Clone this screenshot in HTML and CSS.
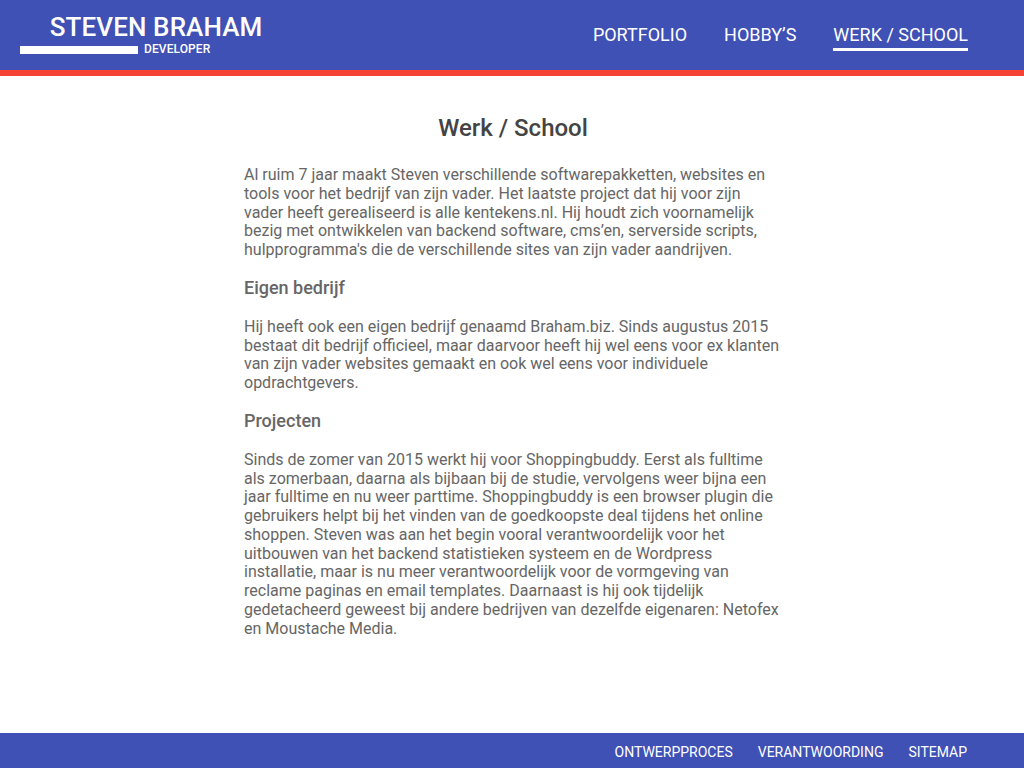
FILE: index.html
```html
<!DOCTYPE html>
<html lang="nl">
<head>
<meta charset="utf-8">
<title>Werk / School - Steven Braham</title>
<link rel="stylesheet" href="styles.css">
</head>
<body>
<header class="topbar">
  <div class="brand">
    <div class="brand-name">STEVEN BRAHAM</div>
    <div class="brand-sub">
      <span class="brand-line"></span>
      <span class="brand-role">DEVELOPER</span>
    </div>
  </div>
  <nav class="mainnav">
    <a href="#" class="navlink">PORTFOLIO</a>
    <a href="#" class="navlink">HOBBY’S</a>
    <a href="#" class="navlink active">WERK / SCHOOL</a>
  </nav>
</header>
<main class="content">
  <h1 class="page-title">Werk / School</h1>
  <p>Al ruim 7 jaar maakt Steven verschillende softwarepakketten, websites en tools voor het bedrijf van zijn vader. Het laatste project dat hij voor zijn vader heeft gerealiseerd is alle kentekens.nl. Hij houdt zich voornamelijk bezig met ontwikkelen van backend software, cms’en, serverside scripts, hulpprogramma's die de verschillende sites van zijn vader aandrijven.</p>
  <h3 class="section-title">Eigen bedrijf</h3>
  <p>Hij heeft ook een eigen bedrijf genaamd Braham.biz. Sinds augustus 2015 bestaat dit bedrijf officieel, maar daarvoor heeft hij wel eens voor ex klanten van zijn vader websites gemaakt en ook wel eens voor individuele opdrachtgevers.</p>
  <h3 class="section-title">Projecten</h3>
  <p>Sinds de zomer van 2015 werkt hij voor Shoppingbuddy. Eerst als fulltime als zomerbaan, daarna als bijbaan bij de studie, vervolgens weer bijna een jaar fulltime en nu weer parttime. Shoppingbuddy is een browser plugin die gebruikers helpt bij het vinden van de goedkoopste deal tijdens het online shoppen. Steven was aan het begin vooral verantwoordelijk voor het uitbouwen van het backend statistieken systeem en de Wordpress installatie, maar is nu meer verantwoordelijk voor de vormgeving van reclame paginas en email templates. Daarnaast is hij ook tijdelijk gedetacheerd geweest bij andere bedrijven van dezelfde eigenaren: Netofex en Moustache Media.</p>
</main>
<footer class="footbar">
  <a href="#" class="footlink">ONTWERPPROCES</a>
  <a href="#" class="footlink">VERANTWOORDING</a>
  <a href="#" class="footlink">SITEMAP</a>
</footer>
</body>
</html>
```
FILE: styles.css
```css
* { box-sizing: border-box; }
html, body { height: 100%; }
body {
  margin: 0;
  font-family: Roboto, "Liberation Sans", sans-serif;
  background: #fff;
  display: flex;
  flex-direction: column;
}
a { text-decoration: none; color: #fff; }

.topbar {
  background: #3f51b5;
  height: 76px;
  border-bottom: 6px solid #f44336;
  display: flex;
  justify-content: space-between;
  align-items: flex-start;
  padding: 0 56px 0 20px;
  flex-shrink: 0;
}
.brand {
  display: flex;
  flex-direction: column;
  align-items: flex-end;
  padding-top: 13px;
  color: #fff;
}
.brand-name {
  font-size: 26px;
  font-weight: 500;
  line-height: 28px;
  margin-right: -52px;
  letter-spacing: 0.1px;
}
.brand-sub {
  display: flex;
  align-items: center;
  margin-top: 2px;
}
.brand-line {
  display: block;
  width: 118px;
  height: 8px;
  background: #fff;
  margin-right: 6px;
}
.brand-role {
  font-size: 12px;
  font-weight: 500;
  line-height: 13px;
  letter-spacing: 0.1px;
}

.mainnav {
  display: flex;
  gap: 37px;
  padding-top: 24px;
}
.navlink {
  font-size: 18px;
  line-height: 22px;
  padding-bottom: 2px;
  border-bottom: 3px solid transparent;
}
.navlink.active { border-bottom-color: #fff; }

.content {
  flex: 1;
  width: 540px;
  margin: 0 auto;
  padding: 0 0 20px 2px;
  color: #666;
}
.page-title {
  text-align: center;
  font-size: 24px;
  font-weight: 500;
  color: #444;
  margin: 38px 0 24px;
  line-height: 28px;
}
.content p {
  font-size: 16px;
  line-height: 18.75px;
  margin: 0;
}
.section-title {
  font-size: 18px;
  font-weight: 500;
  color: #666;
  line-height: 20px;
  margin: 18px 0 20px;
}

.footbar {
  background: #3f51b5;
  height: 35px;
  flex-shrink: 0;
  display: flex;
  justify-content: flex-end;
  align-items: center;
  gap: 25px;
  padding: 2px 57px 0 0;
}
.footlink {
  font-size: 14px;
  line-height: 16px;
}
```
